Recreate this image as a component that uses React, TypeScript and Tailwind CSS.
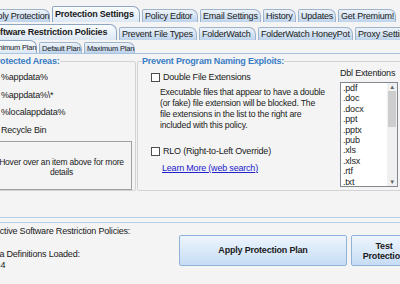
import clsx from "clsx";

type TabDef = { label: string; w: string; sel?: boolean };

const ROW1: TabDef[] = [
  { label: "Apply Protection", w: "w-[66px]" },
  { label: "Protection Settings", w: "w-[88px]", sel: true },
  { label: "Policy Editor", w: "w-[56px]" },
  { label: "Email Settings", w: "w-[61px]" },
  { label: "History", w: "w-[33px]" },
  { label: "Updates", w: "w-[38px]" },
  { label: "Get Premium!", w: "w-[58px]" },
];

const ROW2: TabDef[] = [
  { label: "Software Restriction Policies", w: "w-[131px]", sel: true },
  { label: "Prevent File Types", w: "w-[78px]" },
  { label: "FolderWatch", w: "w-[57px]" },
  { label: "FolderWatch HoneyPot", w: "w-[95px]" },
  { label: "Proxy Settings", w: "w-[65px]" },
];

const ROW3: TabDef[] = [
  { label: "Minimum Plan", w: "w-[49px]", sel: true },
  { label: "Default Plan", w: "w-[43px]" },
  { label: "Maximum Plan", w: "w-[51px]" },
];

const AREAS = ["%appdata%", "%appdata%\\*", "%localappdata%", "Recycle Bin"];
const EXTS = [".pdf", ".doc", ".docx", ".ppt", ".pptx", ".pub", ".xls", ".xlsx", ".rtf", ".txt"];

function Tab({ tab, small }: { tab: TabDef; small?: boolean }) {
  return (
    <div
      className={clsx(
        "flex shrink-0 items-center overflow-visible whitespace-nowrap rounded-tl-[2px] rounded-tr-[7px] border border-b-0 pl-[2px]",
        tab.w,
        tab.sel
          ? "border-[#8ea6c2] bg-linear-to-b from-[#fbfdff] to-[#dce8f5] font-bold"
          : "border-[#9fb3cb] bg-linear-to-b from-[#edf3fa] to-[#bed4ec]",
        small
          ? tab.sel
            ? "h-[13px] text-[7.5px] font-normal"
            : "h-[11px] text-[7.5px]"
          : tab.sel
            ? "h-[16px]"
            : "h-[13px]"
      )}
    >
      {tab.label}
    </div>
  );
}

function Check() {
  return <span className="inline-block h-[9px] w-[9px] shrink-0 border border-[#4d4d4d] bg-white" />;
}

export default function App() {
  return (
    <div className="h-[284px] w-[400px] overflow-hidden bg-[#f4f4f4] font-['Liberation_Sans',Arial,sans-serif] text-[9px] leading-[11px] tracking-[-0.2px] text-[#1a1a1a]">
      <div className="h-[6px]" />
      <div className="ml-[-16px] flex h-[16px] items-end gap-[2px]">
        {ROW1.map((t) => (
          <Tab key={t.label} tab={t} />
        ))}
      </div>
      <div className="h-[2px]" />
      <div className="ml-[-14px] flex h-[16px] items-end gap-[2px]">
        {ROW2.map((t) => (
          <Tab key={t.label} tab={t} />
        ))}
      </div>
      <div className="h-[1px]" />
      <div className="ml-[-12px] flex h-[13px] items-end gap-[2px] border-b border-[#a9c4e0]">
        {ROW3.map((t) => (
          <Tab key={t.label} tab={t} small />
        ))}
      </div>

      <div className="mt-[2px] flex h-[135px] items-start">
        <fieldset className="ml-[-14px] h-[135px] w-[150px] shrink-0 rounded-[2px] border border-[#d3d3d3] pl-[4px] pr-[3px]">
          <legend className="font-bold text-[#3a7dc5]">Protected Areas:</legend>
          <div className="mt-[2px] pl-[10px]">
            {AREAS.map((a) => (
              <div key={a} className="flex h-[17.5px] items-center">
                {a}
              </div>
            ))}
          </div>
          <div className="mt-[2px] flex h-[49px] items-center justify-center border border-[#a0a0a0] pt-[3px] text-center text-[8.5px] leading-[10px]">
            Hover over an item above for more
            <br />
            details
          </div>
        </fieldset>

        <fieldset className="ml-[1px] h-[135px] w-[275px] shrink-0 rounded-[2px] border border-[#d3d3d3] pl-[4px]">
          <legend className="font-bold text-[#3a7dc5]">Prevent Program Naming Exploits:</legend>
          <div className="flex">
            <div className="w-[198px] shrink-0 pl-[9px]">
              <div className="mt-[5px] flex items-center gap-[3px]">
                <Check />
                <span>Double File Extensions</span>
              </div>
              <div className="mt-[4px] pl-[9px] text-[8.7px]">
                Executable files that appear to have a double
                <br />
                (or fake) file extension will be blocked. The
                <br />
                file extensions in the list to the right are
                <br />
                included with this policy.
              </div>
              <div className="mt-[15px] flex items-center gap-[3px]">
                <Check />
                <span>RLO (Right-to-Left Override)</span>
              </div>
              <div className="mt-[6px] pl-[11px] text-[#2222cc] underline">Learn More (web search)</div>
            </div>
            <div className="shrink-0">
              <div className="mt-[1px] whitespace-nowrap">Dbl Extentions</div>
              <div className="mt-[3px] flex h-[105px] w-[58px] border border-[#828790] bg-white">
                <div className="flex-1 pl-[2px] text-[9px] leading-[10.4px]">
                  {EXTS.map((e) => (
                    <div key={e}>{e}</div>
                  ))}
                </div>
                <div className="flex w-[10px] flex-col bg-[#f0f0f0]">
                  <div className="flex h-[8px] items-center justify-center text-[6px] text-[#606060]">▲</div>
                  <div className="mx-[1px] h-[36px] bg-[#cdcdcd]" />
                  <div className="flex-1" />
                  <div className="flex h-[8px] items-center justify-center text-[6px] text-[#606060]">▼</div>
                </div>
              </div>
            </div>
          </div>
        </fieldset>
      </div>

      <div className="h-[26px]" />
      <div className="h-[6px] border-y border-[#b6cfe8]" />

      <div className="flex">
        <div className="w-[179px] shrink-0 pt-[3px]">
          <div className="ml-[-6px] whitespace-nowrap">Active Software Restriction Policies:</div>
          <div className="h-[12px]" />
          <div className="ml-[-14px] whitespace-nowrap">Data Definitions Loaded:</div>
          <div className="ml-[-14px]">1544</div>
        </div>
        <div className="mt-[12px] flex gap-[4px]">
          <button
            type="button"
            className="flex h-[31px] w-[168px] shrink-0 items-center justify-center rounded-[2px] border border-[#8fb2d9] bg-linear-to-b from-[#eef5fd] via-[#dae9f9] to-[#c6dcf4] font-bold"
          >
            Apply Protection Plan
          </button>
          <button
            type="button"
            className="flex h-[31px] w-[66px] shrink-0 items-center justify-center rounded-[2px] border border-[#8fb2d9] bg-linear-to-b from-[#eef5fd] via-[#dae9f9] to-[#c6dcf4] text-center font-bold leading-[10px]"
          >
            Test
            <br />
            Protection
          </button>
        </div>
      </div>
    </div>
  );
}
